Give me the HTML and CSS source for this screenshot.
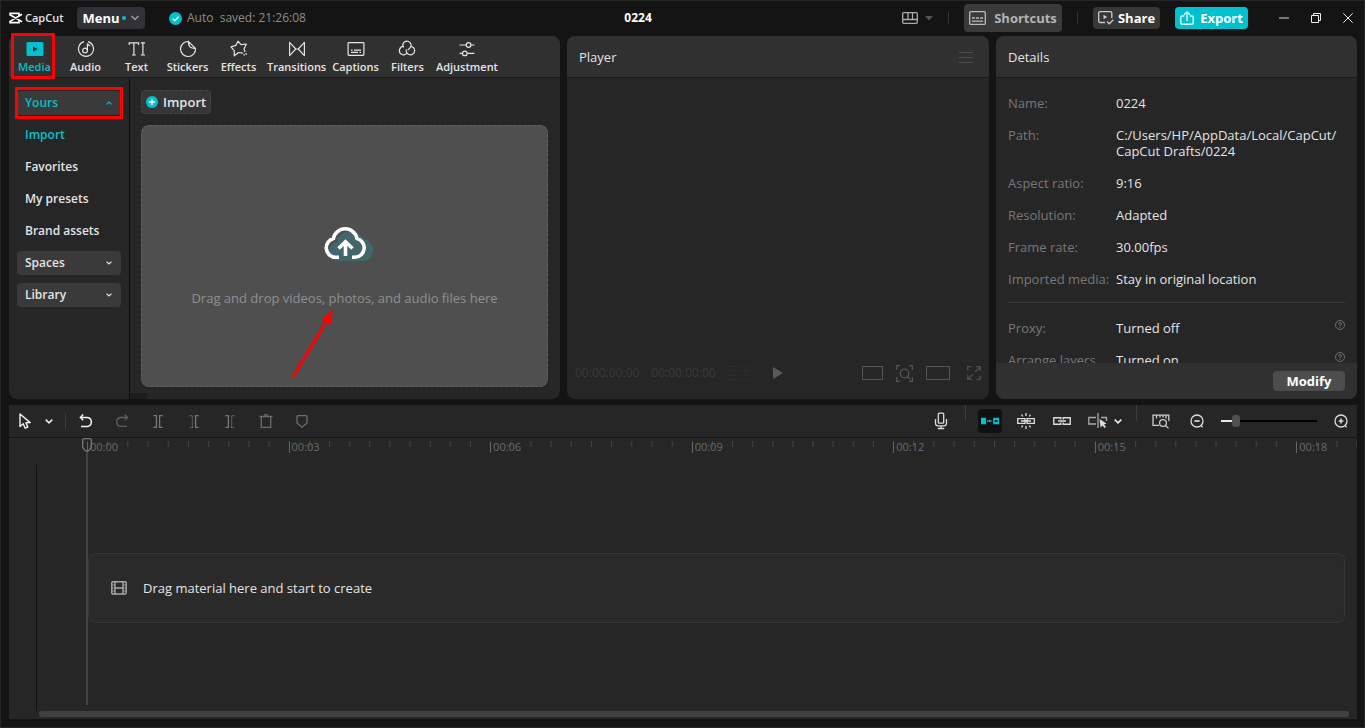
FILE: index.html
```html
<!DOCTYPE html>
<html lang="en">
<head>
    <meta charset="UTF-8">
    <meta name="viewport" content="width=device-width, initial-scale=1.0">
    <title>CapCut - 0224</title>
    <link rel="stylesheet" href="styles.css">
</head>
<body>
    <div class="app">
        <header class="titlebar">
            <div class="title-left">
                <div class="logo">
                    <svg width="14" height="12" viewBox="0 0 14 12" fill="none" stroke="#fff" stroke-width="1.6"><path d="M13 2.2 10 4 1 9.4V10.6H10V8.6M1 3.4V1.4H10V3.4M1 2.8 13 9.8"/></svg>
                    <span>CapCut</span>
                </div>
                <button class="menu-btn">Menu<i class="dot"></i>
                    <svg width="10" height="6" viewBox="0 0 10 6" fill="none" stroke="#999" stroke-width="1.6"><path d="M1.5 1 5 4.4 8.5 1"/></svg>
                </button>
                <div class="saved">
                    <svg width="13" height="13" viewBox="0 0 13 13"><circle cx="6.5" cy="6.5" r="6.5" fill="#00c1cd"/><path d="M3.6 6.6 5.8 8.7 9.5 4.7" fill="none" stroke="#fff" stroke-width="1.3"/></svg>
                    <span>Auto&nbsp; saved: 21:26:08</span>
                </div>
            </div>
            <h1 class="project-name">0224</h1>
            <div class="title-right">
                <button class="layout-btn" aria-label="Layout">
                    <svg width="16" height="12" viewBox="0 0 16 12" fill="none" stroke="#aaa" stroke-width="1.3"><rect x=".7" y=".7" width="14.6" height="10.6" rx="1"/><path d="M.7 7.5H15.3M6 .7V7.5M10.5 .7V7.5"/></svg>
                    <svg width="8" height="5" viewBox="0 0 8 5" fill="#555"><path d="M0 0H8L4 4.5Z"/></svg>
                </button>
                <i class="sep"></i>
                <button class="shortcuts-btn">
                    <svg width="17" height="14" viewBox="0 0 17 14" fill="none" stroke="#bbb" stroke-width="1.3"><rect x=".7" y=".7" width="15.6" height="12.6" rx="1"/><path d="M3 7H14" stroke-dasharray="3 1"/><path d="M3 10.2H14"/></svg>
                    Shortcuts
                </button>
                <i class="sep"></i>
                <button class="share-btn">
                    <svg width="16" height="14" viewBox="0 0 16 14" fill="none" stroke="#ccc" stroke-width="1.3"><path d="M7 11.5H2A1.3 1.3 0 0 1 .7 10.2V2A1.3 1.3 0 0 1 2 .7H12.5A1.3 1.3 0 0 1 13.8 2V7M9 10.5 11.3 12.8 15.3 8.8"/><path d="M5.5 3.8V8.2L9.3 6Z" fill="#ccc" stroke="none"/></svg>
                    Share
                </button>
                <button class="export-btn">
                    <svg width="14" height="14" viewBox="0 0 14 14" fill="none" stroke="#d5fafa" stroke-width="1.4"><path d="M4.3 5H2A1.2 1.2 0 0 0 .8 6.2V12A1.2 1.2 0 0 0 2 13.2H12A1.2 1.2 0 0 0 13.2 12V6.2A1.2 1.2 0 0 0 12 5H9.7M7 10V1M4 3.8 7 .9 10 3.8"/></svg>
                    Export
                </button>
                <div class="window-btns">
                    <button aria-label="Minimize"><svg width="10" height="10" viewBox="0 0 10 10"><path d="M0 4H10V6H0Z" fill="#777"/></svg></button>
                    <button aria-label="Restore"><svg width="10" height="10" viewBox="0 0 10 10" fill="none" stroke="#eee"><path d="M.5 2.5H7.5V9.5H.5ZM2.5 2.5V.5H9.5V7.5H7.5"/></svg></button>
                    <button aria-label="Close"><svg width="10" height="10" viewBox="0 0 10 10" stroke="#eee"><path d="M.3 .3 9.7 9.7M9.7 .3 .3 9.7"/></svg></button>
                </div>
            </div>
        </header>

        <main class="panels">
            <section class="panel media">
                <nav class="tabs">
                    <button class="tab active">
                        <svg width="18" height="18" viewBox="0 0 18 18"><rect x=".5" y="2" width="17" height="14" rx="1.5" fill="#00c1cd"/><path d="M7 6.3V11.7L11.6 9Z" fill="#2f2f2f"/></svg>
                        Media
                    </button>
                    <button class="tab">
                        <svg width="18" height="18" viewBox="0 0 18 18" fill="none" stroke="currentColor" stroke-width="1.2"><path d="M11 1.7A7.5 7.5 0 1 1 7 1.7"/><circle cx="8" cy="10.6" r="2.4"/><path d="M10.4 10.6V3.4C10.6 5 12.5 4.7 12.8 6.2"/></svg>
                        Audio
                    </button>
                    <button class="tab">
                        <svg width="18" height="18" viewBox="0 0 18 18" fill="none" stroke="currentColor" stroke-width="1.2"><path d="M1.2 5V2.8H10.6V5M5.9 2.8V15M4 15H7.8M12.8 2.8H17M12.8 15H17M14.9 2.8V15"/></svg>
                        Text
                    </button>
                    <button class="tab">
                        <svg width="18" height="18" viewBox="0 0 18 18" fill="none" stroke="currentColor" stroke-width="1.2"><path d="M9.5 1.5A7.5 7.5 0 1 0 16.5 8.5L9.5 1.5Q8.8 8.8 16.5 8.5"/></svg>
                        Stickers
                    </button>
                    <button class="tab">
                        <svg width="18" height="18" viewBox="0 0 18 18" fill="none" stroke="currentColor" stroke-width="1.2" stroke-linejoin="round"><path d="M13 13.2 8.5 12.5 4.3 15.8 4.2 10.6 1 6.8 5.8 5.4 8 1.2 11 4.7 16.4 4 14 8.7 15 12M13.8 14 14.5 15.5M15.4 13.5 17 14.5"/></svg>
                        Effects
                    </button>
                    <button class="tab">
                        <svg width="18" height="18" viewBox="0 0 18 18" fill="none" stroke="currentColor" stroke-width="1.2" stroke-linejoin="round"><path d="M1.6 2.4V15.6L7.8 9ZM16.4 2.4V15.6L10.2 9ZM7.8 9H10.2"/></svg>
                        Transitions
                    </button>
                    <button class="tab">
                        <svg width="18" height="18" viewBox="0 0 18 18" fill="none" stroke="currentColor" stroke-width="1.2"><rect x="1.1" y="2.6" width="15.8" height="12.8" rx=".8"/><path d="M4 10.2H5.5M7 10.2H14M4 12.4H11M12.5 12.4H14"/></svg>
                        Captions
                    </button>
                    <button class="tab">
                        <svg width="18" height="18" viewBox="0 0 18 18" fill="none" stroke="currentColor" stroke-width="1.2"><path d="M5.6 7.4A4 4 0 1 1 12 7.8L9.8 10.2M6 6.4A4.2 4.2 0 1 0 9.2 12.8M12.4 6.4A4.2 4.2 0 1 1 8.4 9.4"/></svg>
                        Filters
                    </button>
                    <button class="tab">
                        <svg width="18" height="18" viewBox="0 0 18 18" fill="none" stroke="currentColor" stroke-width="1.2"><path d="M1.6 5H8.2M13 5H16.4M1.6 13.4H4.4M9.2 13.4H16.4"/><circle cx="10.6" cy="5" r="2.3"/><circle cx="6.8" cy="13.4" r="2.3"/></svg>
                        Adjustment
                    </button>
                    <i class="mark mark-tab"></i>
                </nav>
                <div class="media-body">
                    <aside class="side">
                        <button class="side-btn group current">Yours
                            <svg width="6" height="4" viewBox="0 0 6 4" fill="none" stroke="currentColor" stroke-width="1.2"><path d="M.5 3.4 3 1 5.5 3.4"/></svg>
                            <i class="mark mark-side"></i>
                        </button>
                        <button class="side-btn current">Import</button>
                        <button class="side-btn">Favorites</button>
                        <button class="side-btn">My presets</button>
                        <button class="side-btn">Brand assets</button>
                        <button class="side-btn group">Spaces
                            <svg width="6" height="4" viewBox="0 0 6 4" fill="none" stroke="currentColor" stroke-width="1.2"><path d="M.5 .6 3 3 5.5 .6"/></svg>
                        </button>
                        <button class="side-btn group">Library
                            <svg width="6" height="4" viewBox="0 0 6 4" fill="none" stroke="currentColor" stroke-width="1.2"><path d="M.5 .6 3 3 5.5 .6"/></svg>
                        </button>
                    </aside>
                    <div class="content">
                        <button class="import-btn">
                            <svg width="12" height="12" viewBox="0 0 12 12"><circle cx="6" cy="6" r="6" fill="#00c1cd"/><path d="M3 6H9M6 3V9" stroke="#fff" stroke-width="1.3"/></svg>
                            Import
                        </button>
                        <div class="dropzone">
                            <svg width="42" height="38" viewBox="0 0 42 38" fill="none" overflow="visible">
                                <path d="M12 37A10 10 0 0 1 12.5 18A14.5 14.5 0 0 1 39.5 15A11 11 0 0 1 37 37Z" fill="#42666b"/>
                                <path d="M15 33.3H12A9.5 9.5 0 0 1 9.4 14.6A12 12 0 0 1 33 14.6A9.5 9.5 0 0 1 31 33.3H28" stroke="#fff" stroke-width="3.6" stroke-linejoin="round"/>
                                <path d="M21.5 32V18M14.5 24.5 21.5 17.8 28.5 24.5" stroke="#fff" stroke-width="3.6"/>
                            </svg>
                            <p>Drag and drop videos, photos, and audio files here</p>
                            <svg class="arrow" width="44" height="72" viewBox="0 0 44 72"><path d="M3 69 35 16" stroke="#f00" stroke-width="3"/><path d="M43 2 40.5 17.5 31 12Z" fill="#f00"/></svg>
                        </div>
                        <i class="scroll-stub"></i>
                    </div>
                </div>
            </section>

            <section class="panel player">
                <div class="panel-head">
                    <h2>Player</h2>
                    <button aria-label="Player menu"><svg width="14" height="12" viewBox="0 0 14 12" stroke="#4d4d4d"><path d="M0 1.5H14M0 6.5H14M0 11.5H14"/></svg></button>
                </div>
                <div class="player-view"></div>
                <div class="player-bar">
                    <span class="times"><time>00:00:00:00</time><time>00:00:00:00</time>
                        <svg width="22" height="16" viewBox="0 0 22 16" stroke="#2d2d2d"><path d="M0 1.5H9M12 1.5H22M0 5.5H9M12 5.5H22M0 10.5H9M12 10.5H22M0 14.5H9M12 14.5H22"/></svg>
                    </span>
                    <button aria-label="Play"><svg width="10" height="12" viewBox="0 0 10 12" fill="#5a5a5a"><path d="M0 0 10 6 0 12Z"/></svg></button>
                    <span class="view-btns">
                        <button aria-label="Quality"><svg width="21" height="14" viewBox="0 0 21 14" fill="none" stroke="#555"><rect x=".5" y=".5" width="20" height="13"/></svg></button>
                        <button aria-label="Zoom to fit"><svg width="17" height="17" viewBox="0 0 17 17" fill="none" stroke="#555" stroke-width="1.3"><path d="M.7 5V.7H4M13 .7H16.3V5M16.3 12V16.3H13M4 16.3H.7V12M11.5 11.5 14 14"/><circle cx="8.5" cy="8.5" r="4.3"/></svg></button>
                        <button aria-label="Ratio"><svg width="24" height="14" viewBox="0 0 24 14" fill="none" stroke="#555"><rect x=".5" y=".5" width="23" height="13"/></svg></button>
                        <button aria-label="Full screen"><svg width="14" height="14" viewBox="0 0 14 14" fill="none" stroke="#4d4d4d" stroke-width="1.3"><path d="M.7 4.5V.7H4.5M9 .7H13.3V5M8.2 5.8 13 1M13.3 9.5V13.3H9.5M5 13.3H.7V9M1 13 5.8 8.2"/></svg></button>
                    </span>
                </div>
            </section>

            <section class="panel details">
                <div class="panel-head"><h2>Details</h2></div>
                <div class="details-body">
                    <dl>
                        <dt>Name:</dt><dd>0224</dd>
                        <dt>Path:</dt><dd>C:/Users/HP/AppData/Local/CapCut/<wbr>CapCut Drafts/0224</dd>
                        <dt>Aspect ratio:</dt><dd>9:16</dd>
                        <dt>Resolution:</dt><dd>Adapted</dd>
                        <dt>Frame rate:</dt><dd>30.00fps</dd>
                        <dt>Imported media:</dt><dd>Stay in original location</dd>
                    </dl>
                    <dl class="more">
                        <dt>Proxy:</dt><dd>Turned off
                            <svg width="10" height="10" viewBox="0 0 10 10" fill="none" stroke="#777" stroke-width=".9"><circle cx="5" cy="5" r="4.5"/><path d="M3.6 4.2A1.4 1.4 0 1 1 5 5.4V6.2M5 7V8"/></svg></dd>
                        <dt>Arrange layers</dt><dd>Turned on
                            <svg width="10" height="10" viewBox="0 0 10 10" fill="none" stroke="#777" stroke-width=".9"><circle cx="5" cy="5" r="4.5"/><path d="M3.6 4.2A1.4 1.4 0 1 1 5 5.4V6.2M5 7V8"/></svg></dd>
                    </dl>
                </div>
                <div class="details-foot"><button class="modify-btn">Modify</button></div>
            </section>
        </main>

        <section class="timeline">
            <div class="toolbar">
                <div class="tools">
                    <button aria-label="Select"><svg width="16" height="18" viewBox="0 0 16 18" fill="none" stroke="#f2f2f2" stroke-width="1.4" stroke-linejoin="round"><path d="M3 2V14.5L6.2 11.8 8.2 16.2 10.8 15 8.9 10.8 13.2 10.6Z"/></svg></button>
                    <button class="narrow" aria-label="More select modes"><svg width="8" height="5" viewBox="0 0 8 5" fill="none" stroke="#eee" stroke-width="1.6"><path d="M.7 .7 4 3.8 7.3 .7"/></svg></button>
                </div>
                <i class="sep tall"></i>
                <div class="tools">
                    <button aria-label="Undo"><svg width="14" height="14" viewBox="0 0 14 14" fill="none" stroke="#f2f2f2" stroke-width="1.5"><path d="M1.5 3.5H8.5A4.5 4.5 0 0 1 8.5 12.4H2M4.2 .6 1.4 3.5 4.2 6.2"/></svg></button>
                    <button aria-label="Redo"><svg width="14" height="14" viewBox="0 0 14 14" fill="none" stroke="#606060" stroke-width="1.3"><path d="M12.5 3.5H5.5A4.5 4.5 0 0 0 5.5 12.4H12M9.8 .6 12.6 3.5 9.8 6.2"/></svg></button>
                    <button aria-label="Split"><svg width="10" height="13" viewBox="0 0 10 13" fill="none" stroke="#777" stroke-width="1.3"><path d="M.3 .7H3.4V12.3H.3M9.7 .7H6.6V12.3H9.7"/></svg></button>
                    <button aria-label="Delete left"><svg width="10" height="13" viewBox="0 0 10 13" fill="none" stroke="#777" stroke-width="1.3"><path d="M.3 .7H3.4V12.3H.3" stroke-dasharray="1 1"/><path d="M9.7 .7H6.6V12.3H9.7"/></svg></button>
                    <button aria-label="Delete right"><svg width="10" height="13" viewBox="0 0 10 13" fill="none" stroke="#777" stroke-width="1.3"><path d="M.3 .7H3.4V12.3H.3"/><path d="M9.7 .7H6.6V12.3H9.7" stroke-dasharray="1 1"/></svg></button>
                    <button aria-label="Delete"><svg width="14" height="14" viewBox="0 0 14 14" fill="none" stroke="#6c6c6c" stroke-width="1.3"><path d="M.5 2.5H13.5M5 .9H9M2.3 2.5V13.3H11.7V2.5"/></svg></button>
                    <button aria-label="Marker"><svg width="12" height="13" viewBox="0 0 12 13" fill="none" stroke="#6c6c6c" stroke-width="1.3"><path d="M2 .7H10A1 1 0 0 1 11 1.7V8L6 12.2 1 8V1.7A1 1 0 0 1 2 .7Z"/></svg></button>
                </div>
                <div class="tools tools-right">
                    <button aria-label="Record"><svg width="14" height="18" viewBox="0 0 14 18" fill="none" stroke="#ddd" stroke-width="1.3"><rect x="4.3" y="1.2" width="5.4" height="10" rx="1"/><path d="M1.5 7V11.5A2.5 2.5 0 0 0 4 13.8H10A2.5 2.5 0 0 0 12.5 11.5V7M7 14V16.3M3.8 16.5H10.2"/></svg></button>
                    <i class="sep top"></i>
                    <button class="on" aria-label="Main track magnet"><svg width="18" height="8" viewBox="0 0 18 8" fill="#00c1cd"><path d="M0 .8H5V7.2H0ZM12.2 .8H18V7.2H12.2ZM13.8 3V5H16.4V3Z" fill-rule="evenodd"/><circle cx="8.6" cy="4" r="1.2"/><path d="M6 2.6V5.4L7 4ZM11.2 2.6V5.4L10.2 4Z"/></svg></button>
                    <button aria-label="Auto snapping"><svg width="18" height="18" viewBox="0 0 18 18" fill="none" stroke="#ddd" stroke-width="1.3"><path d="M.7 6.6H8V11.4H.7ZM10 6.6H17.3V11.4H10ZM4 9H14M9 1V4M9 14V17M4.5 2.6 5.8 4.5M13.5 2.6 12.2 4.5M4.5 15.4 5.8 13.5M13.5 15.4 12.2 13.5"/></svg></button>
                    <button aria-label="Linkage"><svg width="18" height="8" viewBox="0 0 18 8" fill="none" stroke="#ddd" stroke-width="1.4"><path d="M7.8 2.6V.8H.8V7.2H7.8V5.4M10.2 2.6V.8H17.2V7.2H10.2V5.4M5 4H13"/></svg></button>
                    <div class="pair">
                        <button aria-label="Preview axis"><svg width="20" height="16" viewBox="0 0 20 16" fill="none" stroke="#aaa" stroke-width="1.3"><path d="M8 4.5H.8V11H8M10 0V15M13 4.5H18.5V8"/><path d="M11.5 6 12.6 14.5 14.5 12.6 16.5 15 18 13.7 16 11.4 18.5 10.6Z" fill="#ddd" stroke="none"/></svg></button>
                        <button class="narrow" aria-label="More preview options"><svg width="8" height="5" viewBox="0 0 8 5" fill="none" stroke="#eee" stroke-width="1.6"><path d="M.7 .7 4 3.8 7.3 .7"/></svg></button>
                    </div>
                    <i class="sep top"></i>
                    <button aria-label="Ruler zoom"><svg width="18" height="15" viewBox="0 0 18 15" fill="none" stroke="#ccc" stroke-width="1.3"><path d="M7 11.3H1V1.2H16.8V7M4.5 1.2V4.5M8 1.2V3.5M11 1.2V3.5M14 1.2V4.5"/><circle cx="11" cy="9" r="3.4"/><path d="M13.5 11.5 16.5 14.4"/></svg></button>
                    <button aria-label="Zoom out"><svg width="14" height="14" viewBox="0 0 14 14" fill="none" stroke="#ddd" stroke-width="1.3"><circle cx="7" cy="7" r="6"/><path d="M4.4 7H9.6" stroke-width="1.7"/><path d="M10.8 11.2 12.6 13.4"/></svg></button>
                    <input class="zoom" type="range" min="0" max="100" value="13" aria-label="Timeline zoom">
                    <button aria-label="Zoom in"><svg width="14" height="14" viewBox="0 0 14 14" fill="none" stroke="#ddd" stroke-width="1.3"><circle cx="7" cy="7" r="6"/><path d="M4.6 7H9.4M7 4.6V9.4" stroke-width="1.5"/><path d="M10.8 11.2 12.6 13.4"/></svg></button>
                </div>
            </div>
            <div class="tracks">
                <div class="gutter"></div>
                <div class="track-area">
                    <div class="ruler">
                        <span>00:00</span><span>00:03</span><span>00:06</span><span>00:09</span><span>00:12</span><span>00:15</span><span>00:18</span>
                    </div>
                    <div class="empty-track">
                        <svg width="16" height="14" viewBox="0 0 16 14" fill="none" stroke="#aaa" stroke-width="1.4"><rect x=".8" y=".8" width="14.4" height="12.2" rx="1"/><path d="M4 1V13M12 1V13M4 7H12"/><path d="M1 4H4M1 7H4M1 10H4M12 4H15M12 7H15M12 10H15" stroke-width=".8"/></svg>
                        <span>Drag material here and start to create</span>
                    </div>
                    <div class="playhead">
                        <svg width="10" height="14" viewBox="0 0 10 14" fill="none" stroke="#777" stroke-width="1.3"><path d="M1.7 .7H8.3A1 1 0 0 1 9.3 1.7V9.5L6.5 12.8H3.5L.7 9.5V1.7A1 1 0 0 1 1.7 .7Z"/></svg>
                    </div>
                </div>
            </div>
            <div class="h-scroll"></div>
        </section>
    </div>
</body>
</html>
```
FILE: styles.css
```css
* { box-sizing: border-box; }
body { margin: 0; background: #141414; color: #e4e4e4; font: 13px/16px "Open Sans", "Noto Sans", sans-serif; }
h1, h2, p, dl, dd { margin: 0; font-weight: normal; }
button { display: flex; align-items: center; justify-content: center; margin: 0; padding: 0; border: none; background: none; color: inherit; font: inherit; cursor: pointer; }
svg { flex: none; }

.app { display: flex; flex-direction: column; height: 100vh; padding: 0 7px 8px 8px; border: 1px solid #262626; }

/* title bar */
.titlebar { display: grid; grid-template-columns: 600fr 60fr 690fr; align-items: center; flex: none; height: 35px; padding-bottom: 1px; }
.title-left, .title-right, .logo, .saved { display: flex; align-items: center; }
.logo { gap: 2px; width: 68px; font-size: 11px; font-weight: 600; }
.menu-btn { gap: 4px; width: 68px; height: 22px; border-radius: 4px; background: #323236; color: #fff; font-weight: 700; }
.menu-btn .dot { width: 4px; height: 4px; margin-left: -2px; border-radius: 50%; background: #00c1cd; }
.saved { gap: 5px; margin-left: 24px; color: #8c8c8c; font-size: 12px; }
.project-name { color: #fff; font-size: 12px; font-weight: 700; text-align: center; }
.title-right { justify-content: flex-end; }
.layout-btn { gap: 7px; }
.sep { flex: none; width: 1px; height: 12px; background: #333; }
.title-right .sep { margin: 0 15px; }
.shortcuts-btn, .share-btn, .export-btn { gap: 6px; height: 22px; border-radius: 4px; font-weight: 700; }
.shortcuts-btn { gap: 8px; width: 98px; height: 28px; background: #3a3a3a; color: #b4b4b4; }
.share-btn { gap: 4px; width: 67px; margin-right: 15px; background: #373737; color: #fff; }
.export-btn { width: 73px; background: #00c1cd; color: #fff; }
.window-btns { display: flex; margin-left: 20px; margin-right: -7px; }
.window-btns button { width: 32px; height: 28px; }

/* top panels */
.panels { display: grid; grid-template-columns: 551fr 422fr 361fr; gap: 7px; flex: 363; min-height: 0; }
.panel { display: flex; flex-direction: column; min-width: 0; min-height: 0; border-radius: 8px; background: #262626; }
.panel-head, .tabs { display: flex; flex: none; align-items: center; height: 42px; border-bottom: 1px solid #1b1b1b; border-radius: 8px 8px 0 0; background: #303030; }
.panel-head { justify-content: space-between; padding: 0 16px 0 12px; }
.panel-head h2 { font-size: 13px; }

.tabs { position: relative; }
.tab { flex-direction: column; gap: 1px; min-width: 51px; padding: 0 3px; font-size: 11px; line-height: 15px; font-weight: 600; }
.current, .tab.active { color: #00c1cd; }
.mark { position: absolute; border: 3px solid #f00; }
.mark-tab { left: 2px; top: -3px; width: 44px; height: 46px; border-radius: 1px; }
.mark-side { inset: -4px -2px -4px -2px; }

.media-body { display: flex; flex: 1; min-height: 0; }
.side { display: flex; flex-direction: column; gap: 8px; flex: none; width: 121px; padding: 13px 8px; border-right: 1px solid #0c0c0c; }
.side-btn { position: relative; justify-content: space-between; height: 24px; padding: 0 8px; border-radius: 4px; font-size: 12px; font-weight: 600; }
.side-btn.group { background: #3a3a3a; }
.side-btn.group svg { margin-right: 1px; }
.content { position: relative; display: flex; flex-direction: column; align-items: flex-start; gap: 11px; flex: 1; padding: 12px 12px 12px 11px; }
.import-btn { gap: 5px; height: 24px; padding: 0 4px; border: 1px dashed #444; border-radius: 4px; background: #363636; font-weight: 600; }
.dropzone { position: relative; display: flex; flex: 1; flex-direction: column; align-items: center; justify-content: center; gap: 28px; align-self: stretch; padding-top: 18px; border: 1px dashed #606060; border-radius: 8px; background: #4f4f4f; color: #8f8f8f; }
.arrow { position: absolute; left: calc(50% - 55px); top: 70%; }
.scroll-stub { position: absolute; left: 0; bottom: 0; width: 17px; height: 6px; background: #1d1d1d; }

.player-view { flex: 1; }
.player-bar { display: grid; grid-template-columns: 1fr auto 1fr; align-items: center; flex: none; height: 52px; padding: 0 8px; color: #393939; font-size: 12px; }
.times, .view-btns { display: flex; align-items: center; gap: 12px; }
.view-btns { justify-content: flex-end; gap: 13px; }
.view-btns button:last-child { margin-left: 4px; }

.details-body { flex: 1; min-height: 0; overflow: hidden; padding: 17px 12px 0; }
dl { display: grid; grid-template-columns: 108px 1fr; row-gap: 16px; }
dt { color: #777; white-space: nowrap; }
dd { display: flow-root; }
dd svg { float: right; }
.more { margin-top: 15px; padding-top: 17px; border-top: 1px solid #3a3a3a; }
.details-foot { display: flex; flex: none; align-items: center; justify-content: flex-end; height: 36px; padding: 0 12px; border-radius: 0 0 8px 8px; background: #303030; }
.modify-btn { width: 72px; height: 20px; border-radius: 4px; background: #4d4d4d; color: #fff; font-weight: 700; }

/* timeline */
.timeline { display: flex; flex-direction: column; flex: 314; min-height: 0; margin-top: 6px; background: #262626; }
.toolbar { display: flex; flex: none; align-items: center; gap: 8px; height: 33px; padding: 0 4px; border-bottom: 1px solid #171717; }
.tools { display: flex; align-items: center; gap: 12px; }
.tools:first-child { gap: 4px; }
.tools button { width: 24px; height: 24px; border-radius: 4px; }
.tools button.narrow { width: 16px; }
.tools button.on { background: #111; }
.tools-right { align-self: stretch; margin-left: auto; }
.pair { display: flex; margin-right: -2px; }
.sep.tall { height: 16px; background: #3c3c3c; }
.sep.top { align-self: flex-start; height: 16px; background: #3c3c3c; }
.zoom { width: 96px; height: 14px; margin: 0; appearance: none; background: linear-gradient(90deg, #e8e8e8 13%, #000 13%) center / 100% 2px no-repeat; }
.zoom::-webkit-slider-thumb { appearance: none; width: 8px; height: 12px; border-radius: 3px; background: #505050; }

.tracks { display: flex; flex: 1; min-height: 0; }
.gutter { flex: none; width: 28px; margin-top: 27px; border-right: 1px solid #111; }
.track-area { position: relative; display: flex; flex-direction: column; flex: 1; min-width: 0; padding-left: 50px; }
.ruler { display: flex; flex: none; height: 18px; overflow: hidden; color: #6a6a6a; font-size: 11px; line-height: 18px; }
.ruler span { flex: none; width: 15.87%; padding-left: 3px; background: linear-gradient(#666, #666) 0 4px / 1px 11px no-repeat, linear-gradient(90deg, #444 1px, transparent 1px) 0 3px / 10% 6px repeat-x; }
.empty-track { display: flex; align-items: center; gap: 16px; height: 70px; margin: 97px 12px 0 1px; padding-left: 22px; border: 1px dotted #444; border-radius: 8px; background: #2a2a2a; }
.playhead { position: absolute; left: 45px; top: 0; bottom: 6px; width: 10px; display: flex; flex-direction: column; align-items: center; }
.playhead::after { content: ""; flex: 1; width: 2px; background: #434343; }
.h-scroll { flex: none; height: 6px; margin: 0 8px 2px 30px; border-radius: 3px; background: #404040; }
```
